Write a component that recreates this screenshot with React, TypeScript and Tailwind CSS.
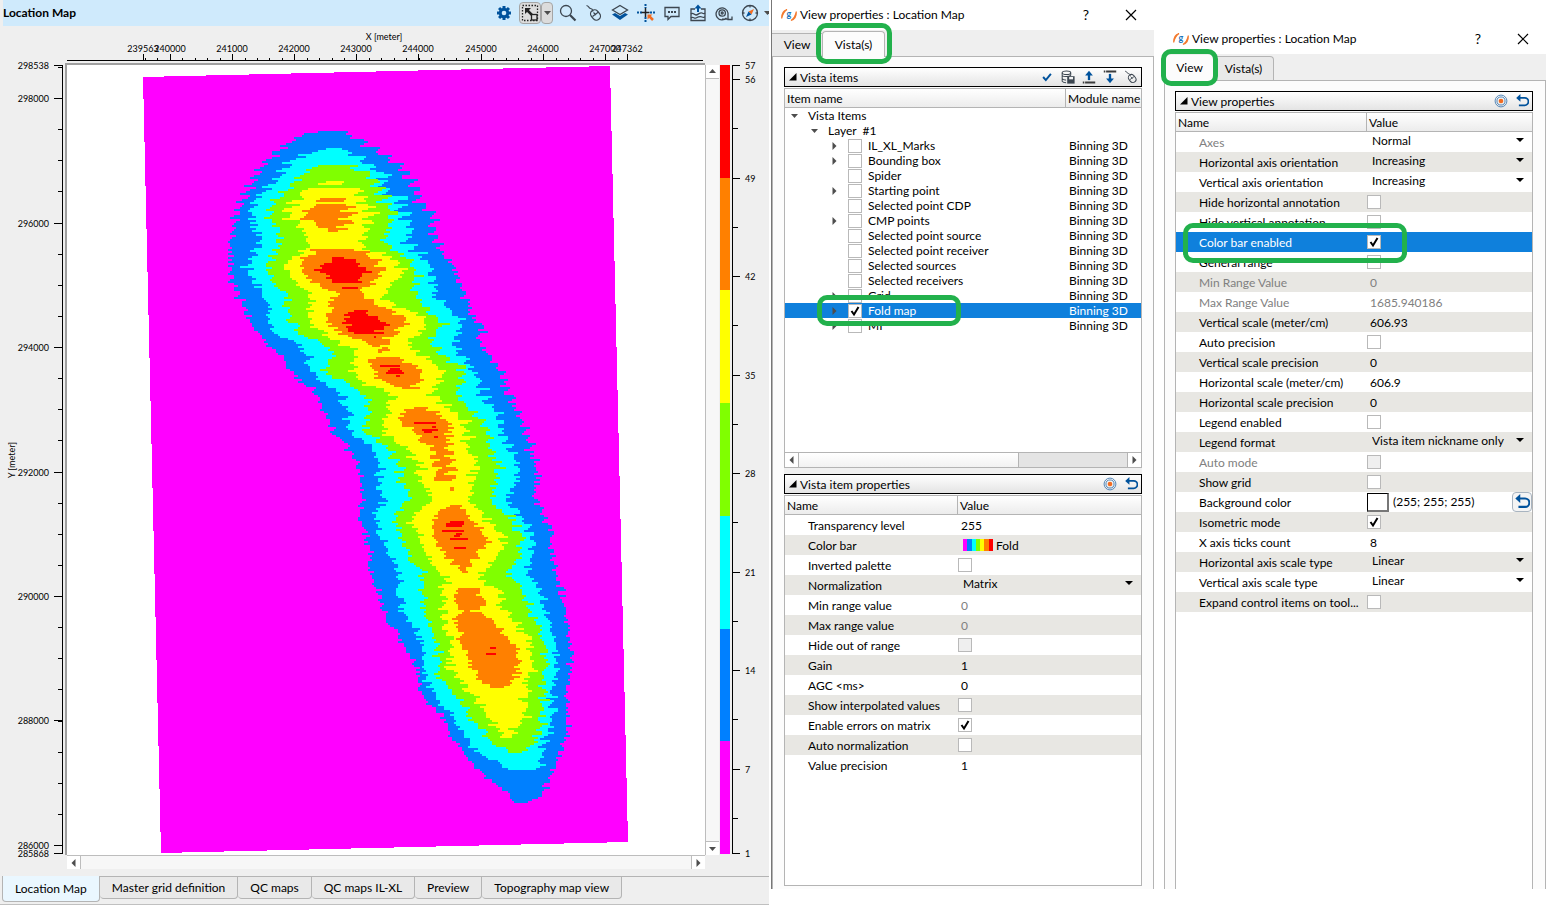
import React, { useState } from "react";
import clsx from "clsx";

type Row = [number, number, number];

// [y, left, right] outlines of every fold level, in window pixels
const LEVELS: { color: string; jitter: number; blobs: Row[][] }[] = [
  {
    color: "#0080ff",
    jitter: 3,
    blobs: [[
      [131, 311, 343], [140, 290, 363], [148, 280, 375], [157, 271, 387], [165, 262, 398], [173, 256, 407],
      [190, 250, 417], [203, 240, 420], [213, 237, 433], [230, 233, 433], [247, 230, 439], [265, 231, 453],
      [283, 233, 460], [300, 242, 467], [317, 247, 473], [327, 253, 483], [340, 262, 478], [353, 280, 487],
      [368, 290, 498], [377, 297, 503], [393, 317, 510], [410, 323, 518], [430, 333, 525], [447, 348, 531],
      [463, 358, 535], [480, 360, 537], [497, 362, 535], [513, 359, 543], [527, 363, 550], [547, 370, 552],
      [570, 370, 555], [590, 377, 562], [610, 383, 565], [630, 396, 569], [650, 407, 571], [667, 417, 570],
      [687, 419, 567], [703, 428, 567], [713, 442, 568], [733, 450, 567], [750, 463, 560], [767, 475, 553],
      [780, 493, 547], [793, 507, 543], [802, 516, 530],
    ]],
  },
  {
    color: "#00ffff",
    jitter: 4,
    blobs: [[
      [148, 323, 343], [157, 300, 362], [165, 288, 373], [173, 282, 387], [187, 270, 383], [198, 257, 403],
      [210, 253, 403], [227, 255, 412], [240, 263, 408], [253, 255, 422], [267, 248, 432], [280, 253, 435],
      [293, 262, 435], [307, 267, 447], [320, 270, 463], [330, 273, 460], [343, 298, 452], [353, 307, 460],
      [367, 310, 473], [380, 320, 480], [393, 342, 483], [407, 347, 495], [430, 350, 505], [447, 372, 510],
      [463, 380, 521], [480, 379, 517], [500, 383, 510], [517, 375, 522], [533, 380, 535], [550, 388, 533],
      [573, 398, 528], [590, 400, 542], [610, 403, 547], [630, 417, 553], [650, 423, 557], [677, 425, 557],
      [697, 437, 553], [713, 452, 553], [730, 462, 550], [743, 470, 546], [757, 487, 544], [769, 510, 538],
    ]],
  },
  {
    color: "#80ff00",
    jitter: 4,
    blobs: [[
      [165, 317, 353], [173, 303, 368], [183, 293, 377], [193, 283, 380], [203, 272, 388], [217, 270, 393],
      [230, 280, 387], [243, 278, 387], [257, 270, 408], [272, 265, 418], [283, 273, 413], [293, 287, 415],
      [310, 287, 430], [323, 293, 443], [333, 300, 435], [343, 323, 432], [353, 333, 443], [367, 325, 462],
      [377, 333, 462], [387, 355, 458], [400, 370, 460], [413, 367, 477], [430, 363, 487], [447, 388, 490],
      [463, 398, 497], [480, 402, 498], [498, 410, 490], [513, 395, 507], [533, 398, 522], [550, 407, 520],
      [573, 423, 508], [590, 423, 522], [610, 423, 530], [630, 432, 540], [650, 438, 547], [677, 440, 543],
      [697, 458, 543], [713, 468, 543], [730, 482, 542], [743, 493, 533], [752, 510, 520],
    ]],
  },
  {
    color: "#ffff00",
    jitter: 5,
    blobs: [
      [[181, 325, 342], [184, 313, 340]],
      [
        [188, 305, 360], [200, 297, 367], [210, 287, 375], [223, 297, 370], [237, 307, 365], [247, 310, 367],
        [257, 292, 397], [268, 283, 402], [280, 293, 397], [290, 310, 385], [303, 313, 393], [317, 308, 427],
        [327, 317, 423], [337, 330, 413], [347, 353, 408], [357, 357, 427], [370, 350, 443], [383, 367, 440],
        [393, 392, 435], [407, 387, 450], [423, 383, 468], [437, 392, 470], [447, 408, 470], [463, 418, 477],
        [480, 422, 475], [500, 432, 467], [513, 415, 485], [527, 412, 497], [543, 422, 505], [560, 428, 493],
        [577, 447, 480], [590, 442, 500], [607, 442, 503], [623, 445, 517], [643, 450, 530], [667, 450, 533],
        [683, 467, 527], [700, 478, 527], [713, 487, 525], [727, 497, 517], [737, 508, 513],
      ],
    ],
  },
  {
    color: "#ff8000",
    jitter: 4,
    blobs: [
      [[198, 320, 345], [200, 315, 343]],
      [[204, 310, 343], [207, 308, 355], [213, 303, 353], [219, 310, 350], [226, 322, 345], [231, 330, 334]],
      [
        [249, 313, 358], [257, 305, 373], [268, 300, 383], [278, 308, 378], [287, 322, 367], [292, 337, 360],
        [298, 335, 367], [307, 328, 385], [317, 327, 407], [325, 330, 403], [333, 343, 397], [340, 360, 385],
        [346, 378, 387], [352, 377, 383],
      ],
      [[357, 370, 403], [367, 370, 420], [377, 377, 423], [387, 400, 413]],
      [
        [407, 410, 427], [413, 400, 437], [423, 403, 450], [433, 417, 448], [441, 423, 451], [447, 430, 450],
        [463, 434, 452], [480, 440, 452],
      ],
      [[487, 450, 454], [489, 449, 453]],
      [
        [505, 446, 462], [517, 433, 468], [527, 432, 480], [540, 435, 488], [553, 443, 478], [563, 455, 473],
        [571, 461, 466],
      ],
      [
        [588, 457, 478], [602, 455, 485], [611, 462, 475], [615, 457, 488], [630, 458, 502], [647, 462, 517],
        [663, 472, 520], [677, 480, 517], [687, 493, 503],
      ],
    ],
  },
  {
    color: "#ff0000",
    jitter: 4,
    blobs: [
      [[257, 333, 348], [263, 325, 360], [270, 318, 368], [276, 328, 362], [281, 333, 366]],
      [[287, 342, 358]],
      [[310, 350, 365], [317, 345, 372], [322, 345, 388], [328, 350, 385], [332, 353, 382]],
      [[336, 373, 375]],
      [[365, 380, 400], [366, 380, 400]],
      [[368, 390, 400], [372, 386, 403]],
      [[375, 395, 399]],
      [[422, 414, 436]],
      [[426, 432, 436]],
      [[429, 422, 437], [431, 424, 432]],
      [[436, 434, 437]],
      [[521, 449, 462], [523, 445, 462], [526, 447, 462]],
      [[530, 441, 463]],
      [[533, 456, 461], [535, 454, 460]],
      [[538, 450, 467]],
      [[547, 454, 465]],
      [[647, 490, 496]],
      [[653, 486, 496]],
    ],
  },
];

const MAP_X = 67;
const MAP_Y = 65;

const noise = (n: number) => {
  const s = Math.sin(n * 12.9898) * 43758.5453;
  return s - Math.floor(s);
};

const ragged = (n: number, amp: number) => {
  const v = noise(n) * 2 - 1;
  return v * Math.abs(v) * amp * 1.4;
};

// one run of 2px cells per row, with the ragged edges of a binned map
const blobPath = (rows: Row[], jitter: number, seed: number) => {
  let d = "";
  const first = rows[0][0];
  const last = rows[rows.length - 1][0];
  for (let y = first; y <= last; y += 2) {
    let i = 0;
    while (i < rows.length - 2 && rows[i + 1][0] < y) i++;
    const a = rows[i];
    const b = rows[Math.min(i + 1, rows.length - 1)];
    const t = b[0] === a[0] ? 0 : Math.min(1, (y - a[0]) / (b[0] - a[0]));
    const amp = rows.length < 4 ? 0 : jitter;
    const slant = amp === 0 ? 0 : y < 220 ? 13 : y < 260 ? 8 : y < 480 ? 6 : 3;
    const tooth = (((y - 131) % 8) / 6 - 0.5) * slant;
    const l = a[1] + (b[1] - a[1]) * t + ragged(y + seed, amp) - tooth * 0.7;
    const r = a[2] + (b[2] - a[2]) * t + ragged(y * 3 + seed + 7, amp) - tooth;
    const x0 = Math.round(l / 2) * 2 - MAP_X;
    const w = Math.max(2, Math.round((r - l) / 2) * 2);
    d += `M${x0} ${y - MAP_Y}h${w}v2h${-w}z`;
  }
  return d;
};

const FoldMap = () => (
  <svg viewBox="0 0 638 790" preserveAspectRatio="none" className="block h-full w-full bg-white" shapeRendering="crispEdges">
    <polygon points="76,12 543,1 561,777 94,788" fill="#ff00ff" />
    {LEVELS.map((level, i) => (
      <path key={level.color} fill={level.color} d={level.blobs.map((b, j) => blobPath(b, level.jitter, i * 31 + j * 5)).join("")} />
    ))}
  </svg>
);

const X_LABELS: [string, number][] = [
  ["239563", 76], ["240000", 103], ["241000", 165], ["242000", 227], ["243000", 289],
  ["244000", 351], ["245000", 414], ["246000", 476], ["247000", 538], ["247362", 560],
];
const X_MINOR = Array.from({ length: 39 }, (_, i) => Math.round(78 + i * 12.44));

const XAxis = () => (
  <svg viewBox="0 0 638 39" preserveAspectRatio="none" className="block h-full w-full overflow-visible" shapeRendering="crispEdges">
    <text x="317" y="14" textAnchor="middle" className="text-[9px]">X [meter]</text>
    {X_LABELS.map(([label, x]) => (
      <g key={label}>
        <text x={x} y="26" textAnchor="middle" className="text-[9px]">{label}</text>
        <rect x={x} y="28" width="1" height="7" />
      </g>
    ))}
    {X_MINOR.map((x) => <rect key={x} x={x} y="32" width="1" height="3" />)}
    <rect x="0" y="34" width="636" height="1" />
    <rect x="-2" y="37" width="640" height="2" fill="#a0a0a0" />
  </svg>
);

const Y_LABELS: [string, number][] = [
  ["298538", 0], ["298000", 33], ["296000", 158], ["294000", 282], ["292000", 407],
  ["290000", 531], ["288000", 655], ["286000", 780], ["285868", 788],
];
const Y_MINOR = Array.from({ length: 26 }, (_, i) => Math.round(2 + i * 31.12));

const YAxis = () => (
  <svg viewBox="0 0 67 790" preserveAspectRatio="none" className="block h-full w-full overflow-visible" shapeRendering="crispEdges">
    <text transform="translate(15 395) rotate(-90)" textAnchor="middle" className="text-[9px]">Y [meter]</text>
    {Y_LABELS.map(([label, y]) => (
      <g key={label}>
        <text x="49" y={y + 4} textAnchor="end" className="text-[9px]">{label}</text>
        <rect x="54" y={y} width="8" height="1" />
      </g>
    ))}
    {Y_MINOR.map((y) => <rect key={y} x="58" y={y} width="4" height="1" />)}
    <rect x="62" y="0" width="1" height="789" />
    <rect x="65" y="-2" width="2" height="792" fill="#a0a0a0" />
  </svg>
);

const BANDS = ["#ff0000", "#ff8000", "#ffff00", "#80ff00", "#00ffff", "#0080ff", "#ff00ff"];
const BAR_LABELS: [string, number][] = [
  ["57", 0], ["56", 14], ["49", 113], ["42", 211], ["35", 310],
  ["28", 408], ["21", 507], ["14", 605], ["7", 704], ["1", 788],
];
const BAR_MINOR = [63, 162, 260, 359, 457, 556, 654, 753];

const ColorBar = () => (
  <svg viewBox="0 0 50 790" preserveAspectRatio="none" className="block h-full w-full overflow-visible" shapeRendering="crispEdges">
    {BANDS.map((c, i) => <rect key={c} x="1" y={Math.round(i * 112.7)} width="10" height="113" fill={c} />)}
    <rect x="13" y="0" width="1" height="789" />
    {BAR_LABELS.map(([label, y]) => (
      <g key={label}>
        <rect x="13" y={y} width="8" height="1" />
        <text x="26" y={y + 4} className="text-[9px]">{label}</text>
      </g>
    ))}
    {BAR_MINOR.map((y) => <rect key={y} x="13" y={y} width="6" height="1" />)}
  </svg>
);

type Dir = "up" | "down" | "left" | "right";
const ARROWS: Record<Dir, string> = {
  up: "M1 6 4.500 2 8 6z",
  down: "M1 3 4.500 7 8 3z",
  left: "M6.500 1v8L2.500 5z",
  right: "M2.500 1v8l4-4z",
};

const Arrow = ({ dir, color = "#4d4d4d" }: { dir: Dir; color?: string }) => (
  <svg width="9" height="10" viewBox="0 0 9 10" fill={color} className="shrink-0"><path d={ARROWS[dir]} /></svg>
);

const Icon = ({ children, size = 18 }: { children: React.ReactNode; size?: number }) => (
  <svg width={size} height={size} viewBox="0 0 18 18" fill="none" stroke="#3c4650" strokeWidth="1.300" className="shrink-0">{children}</svg>
);

const GearIcon = () => (
  <Icon>
    <g fill="#00529c" stroke="none">
      {[0, 45, 90, 135].map((a) => <rect key={a} x="7.500" y="2" width="3" height="14" transform={`rotate(${a} 9 9)`} />)}
      <circle cx="9" cy="9" r="5.200" />
    </g>
    <circle cx="9" cy="9" r="2.300" fill="#cfeafc" stroke="none" />
  </Icon>
);

const ZoomFitIcon = () => (
  <Icon>
    <rect x="1.500" y="1.500" width="15" height="15" strokeDasharray="1.500 1.500" stroke="#222" />
    <path d="M11 11 6 6" stroke="#222" strokeWidth="2.500" />
    <path d="M4 4h6L4 10z" fill="#222" stroke="none" />
    <rect x="10.500" y="10.500" width="5.500" height="5.500" fill="#dcdcdc" stroke="#222" />
  </Icon>
);

const SearchIcon = () => (
  <Icon>
    <circle cx="7" cy="7" r="5.500" />
    <path d="m11 11 5.500 5.500" strokeWidth="2.200" />
  </Icon>
);

const MouseIcon = ({ size }: { size?: number }) => (
  <Icon size={size}>
    <path d="M1.500 1.500c3 .5 1.500 2.500 4 3s2 1.500 2.500 3" strokeWidth="1.200" />
    <rect x="6.500" y="5.500" width="8" height="11" rx="4" transform="rotate(-38 10.500 11)" />
    <path d="m7.500 12.500 6-4.500M8.500 8.500l2.500 2.500" strokeWidth="1.100" />
  </Icon>
);

const LayersIcon = () => (
  <Icon>
    <path d="m9 1.500 7.500 4.500L9 10.500 1.500 6z" />
    <path d="M1 10.500 4 9l5 3 5-3 3 1.500-8 5.500z" fill="#00529c" stroke="none" />
  </Icon>
);

const CrossIcon = () => (
  <Icon>
    <path d="M0 8.500h5M13 8.500h5M8.500 0v4M8.500 13v5" stroke="#00529c" strokeWidth="2" strokeDasharray="2 1" />
    <path d="M4.500 8.500h8M8.500 4v9" stroke="#222" strokeWidth="1.500" />
    <path d="M10.500 10.500h5l-1.600 1.600 3 3-1.800 1.800-3-3-1.600 1.600z" fill="#f36c21" stroke="none" />
  </Icon>
);

const CommentIcon = () => (
  <Icon>
    <path d="M2 3.500h14v9H8l-3 3v-3H2z" />
    <path d="M5 8h2M8 8h2M11 8h2" strokeWidth="2" />
  </Icon>
);

const ExportIcon = () => (
  <Icon>
    <path d="M6 5H2v11.500h14V5h-4" />
    <path d="M2 10c2-2 3 1 5 1s4-3 6-2 2 1 3 0M2 14c2-2 3 1 5 0s4-2 6-1 2 0 3 0" />
    <path d="M9 8V3" stroke="#00529c" strokeWidth="2" />
    <path d="M5.500 4.500 9 .5l3.500 4z" fill="#00529c" stroke="none" />
  </Icon>
);

const TapeIcon = () => (
  <Icon>
    <path d="M11.500 14A6 6 0 1 1 13 9v6.500h4v-3M7 15.200h6" />
    <circle cx="7.200" cy="9" r="3.200" />
    <circle cx="7.200" cy="9" r="1" />
  </Icon>
);

const CompassIcon = () => (
  <Icon>
    <circle cx="9" cy="9" r="7.500" />
    <path d="M9 1.500v2M9 14.500v2M1.500 9h2M14.500 9h2" />
    <path d="M13 5 10.500 10.500 7.500 7.500z" fill="#f36c21" stroke="none" />
    <path d="m5 13 2.500-5.500 3 3z" fill="#00529c" stroke="none" />
  </Icon>
);

const TOOLS: [string, React.FC][] = [
  ["Search", SearchIcon], ["Mouse mode", MouseIcon], ["Layers", LayersIcon], ["Pick", CrossIcon],
  ["Comment", CommentIcon], ["Export image", ExportIcon], ["Measure", TapeIcon], ["Compass", CompassIcon],
];

const TargetIcon = () => (
  <Icon size={14}>
    <circle cx="9" cy="9" r="7.600" stroke="#4a80b4" strokeWidth="1.200" />
    <circle cx="9" cy="9" r="5.200" stroke="#4a80b4" strokeWidth="1.200" />
    <circle cx="9" cy="9" r="3" fill="#f36c21" stroke="none" />
  </Icon>
);

const UndoIcon = ({ size = 14 }: { size?: number }) => (
  <Icon size={size}>
    <path d="M4 5h8.500a3.800 3.800 0 0 1 0 9.500H5" stroke="#00529c" strokeWidth="2.300" />
    <path d="M7 0v10L1.500 5z" fill="#00529c" stroke="none" />
  </Icon>
);

const CheckIcon = () => (
  <Icon size={14}><path d="m4 9 3.500 4L14 5" stroke="#00529c" strokeWidth="2.500" /></Icon>
);

const DatabaseIcon = () => (
  <Icon size={14}>
    <ellipse cx="7" cy="3.500" rx="5.500" ry="2.300" />
    <path d="M1.500 3.500v11c1 1.500 3 2 5 2M1.500 7c1 2 9 2 11 0M1.500 11c1 1.500 3 2 5 1.800M12.500 3.500V7" />
    <path d="M8 8h9.500v9.500H8z" fill="#3c4650" stroke="none" />
    <path d="M10.500 9h5v3h-5z" fill="#f4f4f4" stroke="none" />
  </Icon>
);

const MoveUpIcon = () => (
  <Icon size={14}>
    <path d="M9 13V6" stroke="#00529c" strokeWidth="3" />
    <path d="M4 7 9 1l5 6z" fill="#00529c" stroke="none" />
    <path d="M1 16h2M4 16h13" strokeWidth="2.500" stroke="#3c3c3c" />
  </Icon>
);

const MoveDownIcon = () => (
  <Icon size={14}>
    <path d="M9 5v7" stroke="#00529c" strokeWidth="3" />
    <path d="m4 11 5 6 5-6z" fill="#00529c" stroke="none" />
    <path d="M1 2h2M4 2h13" strokeWidth="2.500" stroke="#3c3c3c" />
  </Icon>
);

const Logo = () => (
  <svg width="16" height="16" viewBox="0 -2 16 16" className="shrink-0 overflow-visible">
    <path d="M6 .5C2.500 1.500.5 4.500.7 9.500 1.500 5.500 3 2.500 6 .5zM10 11.500c3.500-1 5.500-4 5.300-9-.8 4-2.300 7-5.300 9z" fill="#f47b30" stroke="#f47b30" strokeWidth="1.200" />
    <text x="8" y="8" textAnchor="middle" fill="#1b75bc" className="text-[9px] font-bold">g</text>
  </svg>
);

const Scrollbar = ({ vertical }: { vertical?: boolean }) => (
  <div className={clsx("flex h-full border-[#bdbdbd] bg-[#f7f7f7]", vertical ? "flex-col border-l" : "border-t")}>
    <button aria-label="Scroll back" className={clsx("flex items-center justify-center border-[#bdbdbd] bg-white", vertical ? "h-[14px] border-b" : "w-[14px] border-r")}>
      <Arrow dir={vertical ? "up" : "left"} />
    </button>
    <div className="flex-1" />
    <button aria-label="Scroll forward" className={clsx("flex items-center justify-center border-[#bdbdbd] bg-white", vertical ? "h-[14px] border-t" : "w-[14px] border-l")}>
      <Arrow dir={vertical ? "down" : "right"} />
    </button>
  </div>
);

const MAP_TABS = ["Location Map", "Master grid definition", "QC maps", "QC maps IL-XL", "Preview", "Topography map view"];

const MapPanel = () => {
  const [tab, setTab] = useState("Location Map");
  return (
    <section className="mr-[2px] flex min-w-0 flex-col border-b border-[#c0c0c0] bg-[#efefef]">
      <header className="ml-[3px] flex h-[26px] shrink-0 items-center bg-[#cfeafc]">
        <h1 className="font-bold">Location Map</h1>
        <div className="ml-auto flex items-center">
          <button aria-label="Settings" className="flex w-[26px] justify-center"><GearIcon /></button>
          <div className="flex w-[38px] justify-center">
            <button aria-label="Fit view" className="flex h-[22px] w-[22px] items-center justify-center rounded-sm border border-[#a5a5a5] bg-[#dcdcdc]"><ZoomFitIcon /></button>
            <button aria-label="Fit view options" className="flex h-[22px] w-[12px] items-center justify-center rounded-sm border border-[#a5a5a5] bg-[#dcdcdc]"><Arrow dir="down" /></button>
          </div>
          {TOOLS.map(([label, ToolIcon]) => (
            <button key={label} aria-label={label} className="flex w-[26px] justify-center"><ToolIcon /></button>
          ))}
          <button aria-label="More" className="w-[6px] overflow-hidden"><Arrow dir="down" /></button>
        </div>
      </header>

      <div className="grid min-h-0 flex-1 grid-cols-[67px_minmax(0,1fr)_14px_50px] grid-rows-[39px_minmax(0,1fr)_14px]">
        <div />
        <XAxis />
        <div className="col-span-2" />
        <YAxis />
        <FoldMap />
        <Scrollbar vertical />
        <ColorBar />
        <div />
        <Scrollbar />
      </div>

      <nav className="mt-[7px] flex h-[28px] shrink-0 items-start pl-[2px]">
        {MAP_TABS.map((name) => (
          <button
            key={name}
            onClick={() => setTab(name)}
            className={clsx(
              "whitespace-nowrap rounded-b-sm border-r border-b border-[#b4b4b4] px-3",
              name === tab ? "h-[26px] border-l bg-[#eaf7ff]" : "h-[23px] border-t bg-[#e9e9e9]"
            )}
          >
            {name}
          </button>
        ))}
        <div className="flex-1 border-t border-[#b4b4b4]" />
      </nav>
    </section>
  );
};

const Ring = ({ className }: { className: string }) => (
  <span className={clsx("pointer-events-none absolute z-10 rounded-[10px] border-5 border-[#22b14c]", className)} />
);

type CheckProps = { id: string; defaultChecked?: boolean; disabled?: boolean };

const Check = ({ id, defaultChecked = false, disabled }: CheckProps) => {
  const [on, setOn] = useState(defaultChecked);
  return (
    <span className="relative flex h-[14px] w-[14px] shrink-0">
      <input
        id={id}
        type="checkbox"
        checked={on}
        disabled={disabled}
        onChange={(e) => setOn(e.target.checked)}
        className="h-[14px] w-[14px] appearance-none border border-[#b9b9b9] bg-white disabled:bg-[#efefef]"
      />
      {on && (
        <svg viewBox="0 0 14 14" className="pointer-events-none absolute inset-0" fill="none" stroke="#000" strokeWidth="2">
          <path d="m3.500 7 2.500 3.500 4.500-7.500" />
        </svg>
      )}
    </span>
  );
};

const DialogTitle = () => (
  <header className="flex h-[30px] shrink-0 items-center bg-white pr-[17px] pl-[9px]">
    <Logo />
    <h2 className="ml-[3px] whitespace-nowrap">View properties : Location Map</h2>
    <button aria-label="Help" className="ml-auto w-4 text-sm">?</button>
    <button aria-label="Close" className="ml-[31px]">
      <svg width="12" height="12" viewBox="0 0 12 12" stroke="#000" strokeWidth="1.200"><path d="m1 1 10 10M11 1 1 11" /></svg>
    </button>
  </header>
);

const GroupHeader = ({ title, children }: { title: string; children: React.ReactNode }) => (
  <div className="mb-px flex h-[20px] shrink-0 items-center border border-black bg-linear-to-b from-white to-[#e4e4e4] pr-[3px] pl-1">
    <svg width="8" height="8" viewBox="0 0 8 8"><path d="M7.500 0v7.500H0z" /></svg>
    <h3 className="ml-[3px] pt-[2px] whitespace-nowrap">{title}</h3>
    <div className="ml-auto flex items-center gap-[7px]">{children}</div>
  </div>
);

const HEAD = "h-[19px] border-b border-[#b4b4b4] bg-linear-to-b from-white to-[#ececec] p-0 pt-[2px] pl-[2px] text-left leading-4 font-normal whitespace-nowrap";

type Item = { name: string; arrow?: boolean; checked?: boolean };
const ITEMS: Item[] = [
  { name: "IL_XL_Marks", arrow: true },
  { name: "Bounding box", arrow: true },
  { name: "Spider" },
  { name: "Starting point", arrow: true },
  { name: "Selected point CDP" },
  { name: "CMP points", arrow: true },
  { name: "Selected point source" },
  { name: "Selected point receiver" },
  { name: "Selected sources" },
  { name: "Selected receivers" },
  { name: "Grid", arrow: true },
  { name: "Fold map", arrow: true, checked: true },
  { name: "MF", arrow: true },
];

const ItemsTable = () => (
  <table className="w-full table-fixed border-separate border-spacing-0 leading-[15px]">
    <colgroup>
      <col />
      <col className="w-[76px]" />
    </colgroup>
    <thead>
      <tr>
        <th className={HEAD}>Item name</th>
        <th className={clsx(HEAD, "overflow-hidden border-l")}>Module name</th>
      </tr>
    </thead>
    <tbody>
      <tr>
        <td className="h-[15px] p-0">
          <div className="flex items-center pl-[5px]"><button aria-label="Collapse Vista Items" className="w-[18px]"><Arrow dir="down" /></button>Vista Items</div>
        </td>
        <td className="p-0" />
      </tr>
      <tr>
        <td className="h-[15px] p-0">
          <div className="flex items-center pl-[25px]"><button aria-label="Collapse Layer" className="w-[18px]"><Arrow dir="down" /></button>Layer&nbsp; #1</div>
        </td>
        <td className="p-0" />
      </tr>
      {ITEMS.map((item) => (
        <tr key={item.name} className={clsx(item.checked && "bg-[#0f80dc] text-white")}>
          <td className="h-[15px] p-0">
            <div className="relative flex h-[15px] items-center pl-[45px]">
              <span className="flex w-[18px]">
                {item.arrow && <button aria-label={`Expand ${item.name}`}><Arrow dir="right" /></button>}
              </span>
              <Check id={item.name} defaultChecked={item.checked} />
              <label htmlFor={item.name} className="ml-[6px] whitespace-nowrap">{item.name}</label>
              {item.checked && <Ring className="-top-2 left-8 h-[31px] w-36" />}
            </div>
          </td>
          <td className="p-0 pl-[4px] whitespace-nowrap">Binning 3D</td>
        </tr>
      ))}
    </tbody>
  </table>
);

type Prop = {
  name: string;
  kind?: "check" | "select" | "fold" | "color";
  value?: string;
  on?: boolean;
  dim?: boolean;
  off?: boolean;
  selected?: boolean;
};

const ITEM_PROPS: Prop[] = [
  { name: "Transparency level", value: "255" },
  { name: "Color bar", kind: "fold", value: "Fold" },
  { name: "Inverted palette", kind: "check" },
  { name: "Normalization", kind: "select", value: "Matrix" },
  { name: "Min range value", value: "0", off: true },
  { name: "Max range value", value: "0", off: true },
  { name: "Hide out of range", kind: "check", off: true },
  { name: "Gain", value: "1" },
  { name: "AGC <ms>", value: "0" },
  { name: "Show interpolated values", kind: "check" },
  { name: "Enable errors on matrix", kind: "check", on: true },
  { name: "Auto normalization", kind: "check" },
  { name: "Value precision", value: "1" },
];

const VIEW_PROPS: Prop[] = [
  { name: "Axes", kind: "select", value: "Normal", dim: true },
  { name: "Horizontal axis orientation", kind: "select", value: "Increasing" },
  { name: "Vertical axis orientation", kind: "select", value: "Increasing" },
  { name: "Hide horizontal annotation", kind: "check" },
  { name: "Hide vertical annotation", kind: "check" },
  { name: "Color bar enabled", kind: "check", on: true, selected: true },
  { name: "General range", kind: "check" },
  { name: "Min Range Value", value: "0", dim: true, off: true },
  { name: "Max Range Value", value: "1685.940186", dim: true, off: true },
  { name: "Vertical scale (meter/cm)", value: "606.93" },
  { name: "Auto precision", kind: "check" },
  { name: "Vertical scale precision", value: "0" },
  { name: "Horizontal scale (meter/cm)", value: "606.9" },
  { name: "Horizontal scale precision", value: "0" },
  { name: "Legend enabled", kind: "check" },
  { name: "Legend format", kind: "select", value: "Vista item nickname only" },
  { name: "Auto mode", kind: "check", dim: true, off: true },
  { name: "Show grid", kind: "check" },
  { name: "Background color", kind: "color", value: "(255; 255; 255)" },
  { name: "Isometric mode", kind: "check", on: true },
  { name: "X axis ticks count", value: "8" },
  { name: "Horizontal axis scale type", kind: "select", value: "Linear" },
  { name: "Vertical axis scale type", kind: "select", value: "Linear" },
  { name: "Expand control items on tool...", kind: "check" },
];

const PropValue = ({ prop }: { prop: Prop }) => {
  const id = `prop-${prop.name}`;
  switch (prop.kind) {
    case "check":
      return <Check id={id} defaultChecked={prop.on} disabled={prop.off} />;
    case "select":
      return (
        <div className="relative flex h-full flex-1 items-start">
          <select id={id} className="h-[18px] w-full appearance-none bg-transparent pl-[5px]">
            <option>{prop.value}</option>
          </select>
          <svg width="8" height="4" viewBox="0 0 8 4" className="pointer-events-none absolute top-[6px] right-2"><path d="M0 0h8L4 4z" /></svg>
        </div>
      );
    case "fold":
      return (
        <div className="flex items-center pl-[5px]">
          <div className="mr-[3px] flex h-[12px] w-[30px]">
            <span className="flex-1 bg-[#ff00ff]" />
            <span className="flex-1 bg-[#0080ff]" />
            <span className="flex-1 bg-[#00ffff]" />
            <span className="flex-1 bg-[#80ff00]" />
            <span className="flex-1 bg-[#ffff00]" />
            <span className="flex-1 bg-[#ff8000]" />
            <span className="flex-1 bg-[#ff0000]" />
          </div>
          <span className="pt-[2px]">{prop.value}</span>
        </div>
      );
    case "color":
      return (
        <div className="flex flex-1 items-center">
          <button id={id} aria-label="Pick color" className="h-[19px] w-[22px] border border-r-2 border-b-2 border-black border-r-[#777] border-b-[#777] bg-white" />
          <span className="ml-1 whitespace-nowrap">{prop.value}</span>
          <button aria-label="Reset color" className="ml-auto flex h-[20px] w-[20px] items-center justify-center rounded-sm border border-[#a8b4c0] bg-[#f4f4f4]"><UndoIcon size={16} /></button>
        </div>
      );
    default:
      return <span className={clsx("pt-[2px] pl-[3px]", prop.off && "text-[#808080]")}>{prop.value}</span>;
  }
};

const PropTable = ({ props, wide }: { props: Prop[]; wide?: boolean }) => (
  <table className="w-full table-fixed border-separate border-spacing-0 leading-4">
    <colgroup>
      <col className={wide ? "w-[190px]" : "w-[172px]"} />
      <col />
    </colgroup>
    <thead>
      <tr>
        <th className={HEAD}>Name</th>
        <th className={clsx(HEAD, "border-l")}>Value</th>
      </tr>
    </thead>
    <tbody>
      {props.map((prop, i) => (
        <tr key={prop.name} className={clsx(prop.selected ? "bg-[#0f80dc] text-white" : i % 2 === 1 && "bg-[#e8e7e3]", prop.dim && "text-[#808080]")}>
          <td className="h-[20px] p-0">
            <div className="relative flex h-[20px] items-center pt-[2px] pl-[23px] whitespace-nowrap">
              {prop.kind && prop.kind !== "fold" ? <label htmlFor={`prop-${prop.name}`}>{prop.name}</label> : prop.name}
              {prop.selected && <Ring className="-top-[9px] left-[7px] h-10 w-56" />}
            </div>
          </td>
          <td className="p-0 text-black"><div className="flex h-[20px] items-center pl-px"><PropValue prop={prop} /></div></td>
        </tr>
      ))}
    </tbody>
  </table>
);

const BOX = "min-h-0 border border-[#b4b4b4] bg-white";

const VistaDialog = () => (
  <section className="mb-[16px] flex min-w-0 flex-col border-l border-[#777] bg-[#efefef]">
    <DialogTitle />
    <nav className="relative z-10 flex h-[26px] shrink-0 items-end">
      <button className="h-[23px] w-[50px] border-t border-[#b4b4b4] bg-[#e9e9e9]">View</button>
      <div className="relative -mb-px h-[26px]">
        <button className="h-[26px] w-[63px] rounded-t-sm border border-b-0 border-[#b4b4b4] bg-[#fcfcfc]">Vista(s)</button>
        <Ring className="-top-2 -left-[6px] h-[41px] w-19" />
      </div>
    </nav>
    <div className="flex min-h-0 flex-1 flex-col border-t border-r border-l border-[#b4b4b4] bg-[#fcfcfc] pt-[10px] pr-[11px] pb-[3px] pl-[11px]">
      <GroupHeader title="Vista items">
        <CheckIcon />
        <DatabaseIcon />
        <MoveUpIcon />
        <MoveDownIcon />
        <MouseIcon size={14} />
      </GroupHeader>
      <div className={clsx(BOX, "flex flex-[380] flex-col")}>
        <div className="min-h-0 flex-1"><ItemsTable /></div>
        <div className="flex h-[15px] shrink-0 border-t border-[#b4b4b4] bg-[#e4e4e4]">
          <button aria-label="Scroll left" className="flex w-[14px] items-center justify-center border-r border-[#b4b4b4] bg-white"><Arrow dir="left" /></button>
          <div className="w-[220px] border-r border-[#b4b4b4] bg-linear-to-b from-white to-[#f2f2f2]" />
          <button aria-label="Scroll right" className="ml-auto flex w-[14px] items-center justify-center border-l border-[#b4b4b4] bg-white"><Arrow dir="right" /></button>
        </div>
      </div>
      <div className="h-[6px] shrink-0 bg-[#f0f0f0]" />
      <GroupHeader title="Vista item properties">
        <TargetIcon />
        <UndoIcon />
      </GroupHeader>
      <div className={clsx(BOX, "flex-[391]")}><PropTable props={ITEM_PROPS} /></div>
    </div>
  </section>
);

const ViewDialog = () => (
  <section className="mt-[24px] mr-[3px] mb-[16px] ml-[10px] flex min-w-0 flex-col bg-[#efefef]">
    <DialogTitle />
    <nav className="relative z-10 flex h-[26px] shrink-0 items-end pl-[2px]">
      <div className="relative -mb-px h-[26px]">
        <button className="h-[26px] w-[47px] bg-[#fcfcfc]">View</button>
        <Ring className="-top-[6px] -left-[5px] h-[37px] w-[57px]" />
      </div>
      <button className="h-[24px] w-[61px] rounded-t-sm border border-b-0 border-[#b4b4b4] bg-[#e9e9e9]">Vista(s)</button>
    </nav>
    <div className="flex min-h-0 flex-1 flex-col border-t border-r border-l border-[#b4b4b4] bg-[#fcfcfc] pt-[10px] pr-[12px] pl-[10px]">
      <GroupHeader title="View properties">
        <TargetIcon />
        <UndoIcon />
      </GroupHeader>
      <div className={clsx(BOX, "flex-1 border-b-0")}><PropTable props={VIEW_PROPS} wide /></div>
    </div>
  </section>
);

const App: React.FC = () => (
  <main className="grid h-screen min-h-[760px] grid-cols-[771fr_383fr_395fr] grid-rows-[minmax(0,1fr)] bg-white font-[Lato,'Open_Sans',sans-serif] text-[12px] leading-4 text-black">
    <MapPanel />
    <VistaDialog />
    <ViewDialog />
  </main>
);

export default App;
